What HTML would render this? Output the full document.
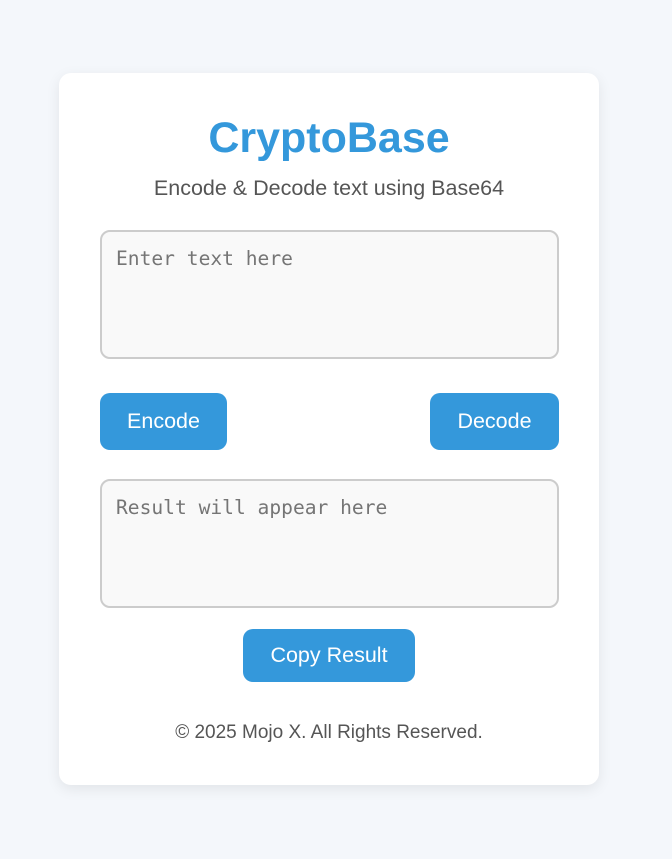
<!DOCTYPE html>
<html><head><meta charset="utf-8"><style>
html,body{margin:0;padding:0;}
body{width:672px;height:859px;background:#f4f7fb;font-family:"Liberation Sans",sans-serif;position:relative;overflow:hidden;}
.card{position:absolute;left:59px;top:73px;width:540px;height:712px;background:#fff;border-radius:12px;box-shadow:0 4px 14px rgba(0,0,0,0.08);}
.c{position:absolute;left:59px;width:540px;text-align:center;}
h1{margin:0;top:113px;color:#3498db;font-size:43px;font-weight:bold;line-height:50px;}
.sub{top:176px;color:#555;font-size:21.5px;line-height:24px;}
.ta{position:absolute;left:100px;width:455px;height:125px;border:2px solid #ccc;border-radius:10px;background:#f9f9f9;box-sizing:content-box;}
.ta span{position:absolute;left:14px;top:15px;font-family:"DejaVu Sans Mono","Liberation Mono",monospace;font-size:19.6px;color:#757575;}
.btn{position:absolute;background:#3498db;color:#fff;border-radius:10px;font-size:21.5px;text-align:center;}
.foot{top:722px;color:#555;font-size:19px;line-height:22px;}
</style></head><body>
<div class="card"></div>
<h1 class="c">CryptoBase</h1>
<div class="c sub">Encode &amp; Decode text using Base64</div>
<div class="ta" style="top:230px"><span>Enter text here</span></div>
<div class="btn" style="left:100px;top:393px;width:127px;height:57px;line-height:57px">Encode</div>
<div class="btn" style="left:430px;top:393px;width:129px;height:57px;line-height:57px">Decode</div>
<div class="ta" style="top:479px"><span>Result will appear here</span></div>
<div class="btn" style="left:243px;top:629px;width:172px;height:53px;line-height:53px">Copy Result</div>
<div class="c foot">© 2025 Mojo X. All Rights Reserved.</div>
</body></html>
